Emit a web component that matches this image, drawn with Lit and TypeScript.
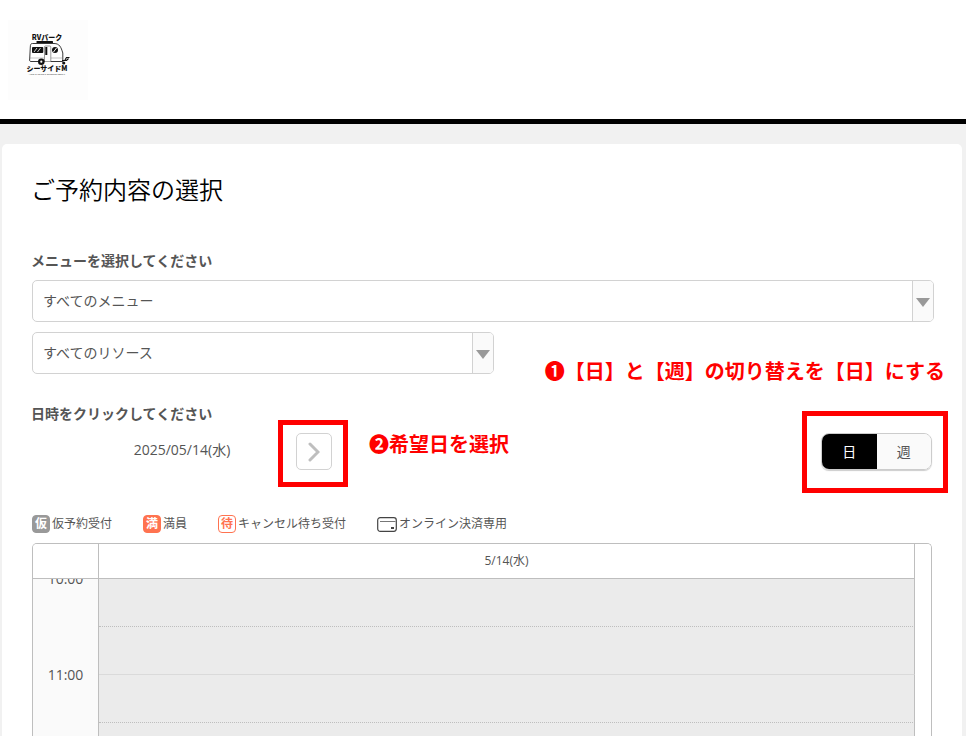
import { LitElement, html, css } from "lit";
import { customElement, state } from "lit/decorators.js";
import { classMap } from "lit/directives/class-map.js";

@customElement("park-logo")
class ParkLogo extends LitElement {
  static styles = css`
    :host { display: block; width: 80px; height: 80px; background: #fdfdfd; }
    svg { display: block; width: 100%; height: 100%; }
    text { font-family: "Noto Sans CJK JP", sans-serif; font-weight: 900; fill: #111; text-anchor: middle; }
    .name { font-size: 7px; }
    .tag { font-family: "Liberation Sans", sans-serif; font-weight: 400; font-size: 2px; fill: #333; }
  `;
  render() {
    return html`<svg viewBox="0 0 80 80" role="img" aria-label="RVパーク シーサイドM">
      <text class="name" x="39" y="20">RVパーク</text>
      <rect x="28.5" y="21" width="16.5" height="2" rx=".6" fill="#111" />
      <path d="M24.5 23.500H46C51.500 23.500 53 27 54.800 33V41.500H23C21.600 41.500 21.400 40.500 21.700 39L22.300 27C22.400 24.500 22.800 23.500 24.500 23.500Z" fill="#fff" stroke="#222" stroke-width=".9" />
      <path d="M21.800 38H36M43 38H54.500" stroke="#888" stroke-width=".5" />
      <rect x="24" y="27" width="11.300" height="6" rx="1" fill="#111" />
      <path d="M26 32L29 28M29.500 32L32.500 28" stroke="#fff" stroke-width=".8" />
      <path d="M36.500 41.500V27Q36.500 26 37.500 26H41.800Q42.800 26 42.800 27V41.500" fill="#fff" stroke="#555" stroke-width=".6" />
      <rect x="37.300" y="27" width="2" height="8" fill="#111" />
      <circle cx="47" cy="30" r="3" fill="#111" />
      <path d="M45.500 32L48.500 28" stroke="#fff" stroke-width="1" />
      <circle cx="33.300" cy="41.700" r="3.300" fill="#111" />
      <circle cx="33.300" cy="41.700" r="1.100" fill="#fff" />
      <path d="M54 40.500H58.500L60.500 38.500M57 40L58.500 37.500H61.500" fill="none" stroke="#111" stroke-width="1.200" />
      <circle cx="55.700" cy="43" r="1.600" fill="#111" />
      <text class="name" x="39" y="51">シーサイドM</text>
      <text class="tag" x="39" y="55">AUTO CAMPING &amp; OUTDOOR RENTAL</text>
    </svg>`;
  }
}

@customElement("select-box")
class SelectBox extends LitElement {
  static properties = { label: {}, option: {} };
  static styles = css`
    :host { display: block; }
    .box { display: grid; grid-template-columns: 1fr 21px; height: 40px; border: 1px solid #d2d2d2; border-radius: 5px; overflow: hidden; background: #fff; }
    select { grid-area: 1 / 1 / 2 / 3; appearance: none; border: 0; background: transparent; padding: 0 30px 2px 10px; margin: 0; color: #555; font: 400 14px "Open Sans", "Noto Sans CJK JP", sans-serif; }
    .arrow { grid-area: 1 / 2; display: flex; align-items: center; justify-content: center; border-left: 1px solid #d2d2d2; background: #fafafa; pointer-events: none; }
    .arrow::after { content: ""; border: 7px solid transparent; border-top: 9px solid #999; border-bottom: 0; margin-top: 2px; }
  `;
  declare label: string;
  declare option: string;
  render() {
    return html`<div class="box">
      <select aria-label=${this.label}><option>${this.option}</option></select>
      <span class="arrow"></span>
    </div>`;
  }
}

const HOURS = ["10:00", "11:00"];

@customElement("app-root")
class AppRoot extends LitElement {
  @state() private view = "day";

  static styles = css`
    :host {
      display: flex; flex-direction: column; height: 100vh; overflow: hidden; background: #f1f1f1; color: #555;
      font: 400 14px/20px "Open Sans", "Noto Sans CJK JP", sans-serif;
    }
    header { flex: none; background: #fff; border-bottom: 5px solid #000; padding: 20px 8px 19px; }
    main { flex: 1; min-height: 0; display: flex; flex-direction: column; margin: 20px 4px 0 2px; padding: 28px 28px 0 29px; background: #fff; border-radius: 5px 5px 0 0; }
    h1 { margin: 0; font-size: 24px; line-height: 36px; font-weight: 350; color: #000; }
    h2 { margin: 0; font-size: 14px; line-height: 20px; font-weight: 700; color: #555; }
    .menu-title { margin-top: 43px; }
    .selects { display: flex; flex-direction: column; gap: 10px; margin: 9px 0 30px 1px; }
    .resource { width: 100%; max-width: 462px; }
    .controls { display: flex; align-items: center; justify-content: space-between; margin: 9px 2px 0 1px; }
    .pager { display: grid; grid-template-columns: 36px 228px 36px; align-items: center; text-align: center; }
    .date { grid-column: 2; margin-bottom: 4px; }
    .marked { position: relative; }
    button { font: inherit; color: inherit; margin: 0; padding: 0; cursor: pointer; }
    .next { display: flex; align-items: center; justify-content: center; width: 36px; height: 37px; border: 1px solid #d2d2d2; border-radius: 5px; background: #fff; }
    .frame { position: absolute; border: 5px solid #f00; pointer-events: none; }
    .frame-next { inset: -13px -16px -17px -18px; }
    .frame-view { inset: -22px -16px -23px -19px; }
    .note { position: absolute; color: #f00; font: 700 20px/28px "Noto Sans CJK JP", sans-serif; white-space: nowrap; }
    .note-next { left: 73px; top: -3px; }
    .note-view { right: -13px; top: -76px; }
    .toggle { display: flex; box-sizing: border-box; width: 111px; height: 37px; border: 1px solid #ccc; border-radius: 8px; overflow: hidden; box-shadow: 0 1px 1px #ccc; }
    .toggle button { flex: 1; border: 0; background: #fafafa; }
    .toggle button.on { background: #000; color: #fff; }
    .legend { display: flex; gap: 31px; list-style: none; margin: 44px 0 9px 1px; padding: 0; font-size: 12px; }
    .legend li { display: flex; align-items: center; gap: 2px; white-space: nowrap; }
    .tag { box-sizing: border-box; width: 18px; height: 18px; border: 1px solid; border-radius: 4px; font-weight: 700; line-height: 16px; text-align: center; color: #fff; }
    .tentative { background: #999; border-color: #999; }
    .full { background: #ff7350; border-color: #ff7350; }
    .wait { color: #ff7350; background: #fff; }
    .calendar { flex: 1; min-height: 0; overflow: hidden; margin: 0 2px 0 1px; border: 1px solid #bebebe; border-bottom: 0; border-radius: 5px 5px 0 0; }
    table { width: 100%; border-collapse: separate; border-spacing: 0; table-layout: fixed; }
    .col-time { width: 66px; }
    .col-end { width: 16px; }
    th, td { box-sizing: border-box; padding: 0; font-weight: 400; }
    thead th { position: relative; height: 35px; background: #fff; border-right: 1px solid #bebebe; border-bottom: 1px solid #bebebe; font-size: 12px; }
    thead .gutter { border: 0; }
    .time { background: #fafafa; border-right: 1px solid #bebebe; vertical-align: top; }
    .time span { display: block; margin-top: -10px; }
    .slot { height: 48px; background: #ebebeb; border-right: 1px solid #bebebe; border-bottom: 1px dotted #bebebe; }
    .slot.half { border-bottom: 1px solid #dadada; }
  `;

  private toggleButton(id: string, text: string) {
    return html`<button class=${classMap({ on: this.view === id })} aria-pressed=${this.view === id}
      @click=${() => (this.view = id)}>${text}</button>`;
  }

  render() {
    return html`
      <header><park-logo></park-logo></header>
      <main>
        <h1>ご予約内容の選択</h1>
        <h2 class="menu-title">メニューを選択してください</h2>
        <div class="selects">
          <select-box label="メニュー" option="すべてのメニュー"></select-box>
          <select-box class="resource" label="リソース" option="すべてのリソース"></select-box>
        </div>
        <h2>日時をクリックしてください</h2>
        <div class="controls">
          <div class="pager">
            <span class="date">2025/05/14(水)</span>
            <div class="marked">
              <button class="next" aria-label="次の日">
                <svg width="12" height="20" viewBox="0 0 12 20"><path d="M2 2L10 10L2 18" fill="none" stroke="#bebebe" stroke-width="3" stroke-linecap="round" /></svg>
              </button>
              <div class="frame frame-next"></div>
              <div class="note note-next">❷希望日を選択</div>
            </div>
          </div>
          <div class="marked">
            <div class="toggle">${this.toggleButton("day", "日")}${this.toggleButton("week", "週")}</div>
            <div class="frame frame-view"></div>
            <div class="note note-view">❶【日】と【週】の切り替えを【日】にする</div>
          </div>
        </div>
        <ul class="legend">
          <li><span class="tag tentative">仮</span>仮予約受付</li>
          <li><span class="tag full">満</span>満員</li>
          <li><span class="tag wait">待</span>キャンセル待ち受付</li>
          <li>
            <svg width="20" height="16" viewBox="0 0 20 16"><rect x=".7" y="1.700" width="18.600" height="13.600" rx="2.500" fill="#fff" stroke="#444" stroke-width="1.200" /><path d="M3 5.500H18.500" stroke="#777" stroke-width="1" /><rect x="14" y="11" width="3" height="2" fill="#444" /></svg>オンライン決済専用
          </li>
        </ul>
        <div class="calendar">
          <table>
            <colgroup><col class="col-time" /><col /><col class="col-end" /></colgroup>
            <thead><tr><th></th><th>5/14(水)</th><th class="gutter"></th></tr></thead>
            <tbody>
              ${HOURS.map((hour) => html`
                <tr><th class="time" rowspan="2"><span>${hour}</span></th><td class="slot"></td><td></td></tr>
                <tr><td class="slot half"></td><td></td></tr>`)}
            </tbody>
          </table>
        </div>
      </main>
    `;
  }
}
